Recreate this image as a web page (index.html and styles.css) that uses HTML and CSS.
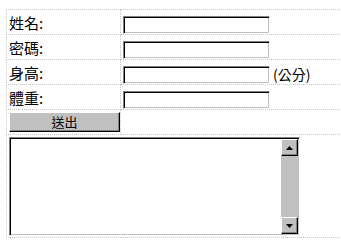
FILE: index.html
```html
<!DOCTYPE html>
<html>
<head>
<meta charset="utf-8">
<link rel="stylesheet" href="styles.css">
</head>
<body>
<table class="form">
  <tr class="r1">
    <td class="lbl">姓名:</td>
    <td class="fld"><div class="input"></div></td>
  </tr>
  <tr class="r2">
    <td class="lbl">密碼:</td>
    <td class="fld"><div class="input"></div></td>
  </tr>
  <tr class="r3">
    <td class="lbl">身高:</td>
    <td class="fld"><div class="input"></div><span class="unit">(公分)</span></td>
  </tr>
  <tr class="r4">
    <td class="lbl">體重:</td>
    <td class="fld"><div class="input"></div></td>
  </tr>
  <tr class="r5">
    <td class="lbl"><div class="btn">送出</div></td>
    <td class="fld"></td>
  </tr>
  <tr class="r6">
    <td class="area-cell" colspan="2">
      <div class="area">
        <div class="area-text"></div>
        <div class="sbar">
          <div class="arrow"><svg width="7" height="4" viewBox="0 0 7 4"><path d="M0 4H7L3.5 0Z" fill="#000"/></svg></div>
          <div class="track"></div>
          <div class="arrow"><svg width="7" height="4" viewBox="0 0 7 4"><path d="M0 0H7L3.5 4Z" fill="#000"/></svg></div>
        </div>
      </div>
    </td>
  </tr>
</table>
</body>
</html>
```

FILE: styles.css
```css
html, body {
  margin: 0;
  padding: 0;
  background: #fff;
  overflow: hidden;
}
body {
  padding: 9px 0 0 6px;
  font-family: "Noto Sans CJK TC", "Liberation Sans", sans-serif;
  color: #000;
}
.form {
  border-collapse: collapse;
  width: 340px;
  table-layout: fixed;
}
.form td {
  border: 1px dotted #c4c4c4;
  padding: 0 0 0 2px;
  vertical-align: middle;
}
.form td.lbl {
  width: 111px;
  font-size: 15px;
  line-height: 15px;
}
.r1 { height: 23px; }
.r2 { height: 24px; }
.r3 { height: 25px; }
.r4 { height: 25px; }
.r5 { height: 25px; }
.r6 { height: 103px; }
.fld {
  white-space: nowrap;
}
.input {
  display: inline-block;
  vertical-align: middle;
  width: 147px;
  height: 18px;
  box-sizing: border-box;
  background: #fff;
  border-style: solid;
  border-width: 1px;
  border-color: #808080 #fff #fff #808080;
  box-shadow: inset 1px 1px 0 #000, inset -1px -1px 0 #c0c0c0;
}
.unit {
  display: inline-block;
  vertical-align: middle;
  font-size: 14px;
  line-height: 15px;
  margin-left: 3px;
}
.btn {
  width: 111px;
  height: 20px;
  box-sizing: border-box;
  background: #c0c0c0;
  border-style: solid;
  border-width: 1px;
  border-color: #fff #000 #000 #fff;
  box-shadow: inset -1px -1px 0 #808080;
  font-size: 13px;
  line-height: 17px;
  text-align: center;
}
.area-cell {
  vertical-align: top !important;
  padding: 2px 0 0 2px !important;
}
.area {
  width: 291px;
  height: 99px;
  box-sizing: border-box;
  display: flex;
  border-style: solid;
  border-width: 1px;
  border-color: #808080 #fff #fff #808080;
  box-shadow: inset 1px 1px 0 #000, inset -1px -1px 0 #c0c0c0;
  padding: 1px 1px 1px 1px;
  background: #fff;
}
.area-text {
  flex: 1;
}
.sbar {
  width: 17px;
  display: flex;
  flex-direction: column;
  background: #c0c0c0;
}
.arrow {
  height: 17px;
  box-sizing: border-box;
  background: #c0c0c0;
  border-style: solid;
  border-width: 1px;
  border-color: #fff #000 #000 #fff;
  box-shadow: inset -1px -1px 0 #808080;
  display: flex;
  align-items: center;
  justify-content: center;
}
.track {
  flex: 1;
}
```
